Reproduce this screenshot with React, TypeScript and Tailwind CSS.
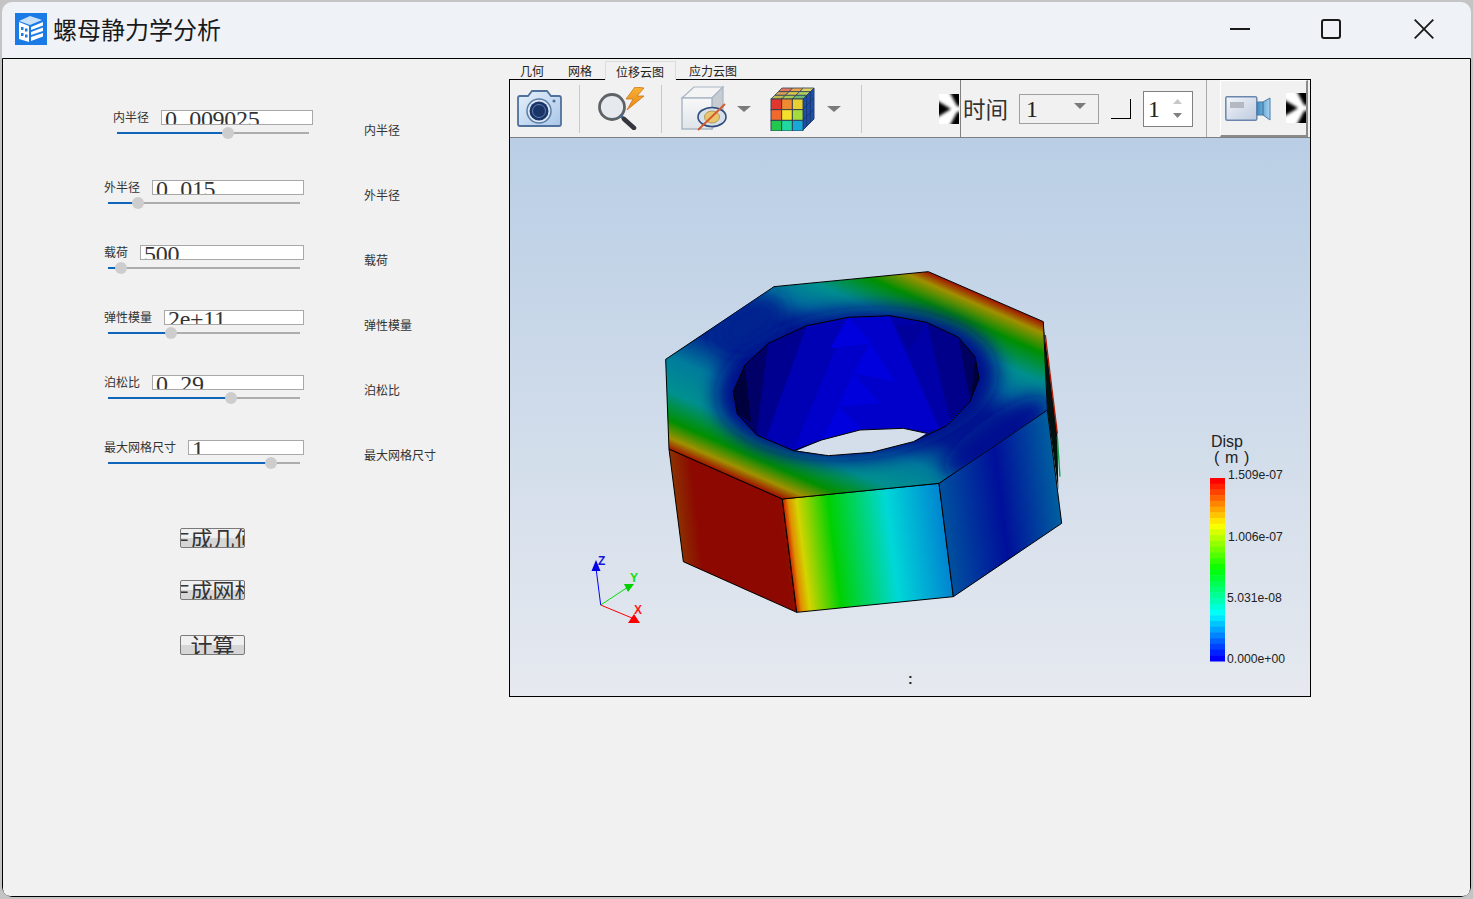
import React from "react";

const rows = [
  { label: "内半径", value: "0.009025", pct: 57.8, first: true },
  { label: "外半径", value: "0.015", pct: 15.6 },
  { label: "载荷", value: "500", pct: 6.8 },
  { label: "弹性模量", value: "2e+11", pct: 32.8 },
  { label: "泊松比", value: "0.29", pct: 64 },
  { label: "最大网格尺寸", value: "1", pct: 85 },
];

function Slider({ pct }: { pct: number }) {
  return (
    <div className="relative mx-1 mt-px flex h-[14px] items-center">
      <div className="h-[2px] bg-[#0f65b7]" style={{ width: `${pct}%` }} />
      <div className="h-[2px] flex-1 bg-[#adadad]" />
      <div
        className="absolute top-[1px] h-[12px] w-[12px] -translate-x-1/2 rounded-full bg-[#cdcdcd]"
        style={{ left: `${pct}%` }}
      />
    </div>
  );
}

function Row({ label, value, pct, first }: { label: string; value: string; pct: number; first?: boolean }) {
  const parts = value.split(".");
  return (
    <div className={first ? "ml-[9px] h-[70px] w-[200px]" : "h-[65px] w-[200px]"}>
      <div className="flex h-[15px] items-center">
        <span className="pb-[2px] text-xs leading-none text-[#333]">{label}</span>
        <div className="ml-3 h-[15px] flex-1 overflow-hidden border border-[#a8a8a8] bg-white pl-[3px] font-['Liberation_Serif',serif] text-[24px] leading-[24px] tracking-[-0.3px] text-[#333]">
          <div className="-mt-[4px] whitespace-nowrap">
            {parts[0]}
            {parts.length > 1 && <span className="tracking-[6.5px]">.</span>}
            {parts[1]}
          </div>
        </div>
      </div>
      <Slider pct={pct} />
    </div>
  );
}

function ClipButton({ text, className }: { text: string; className: string }) {
  return (
    <div
      className={`ml-[76px] flex h-[20px] w-[65px] justify-center overflow-hidden rounded-[2px] border border-[#7a7a7a] bg-linear-to-b from-[#f0f0f0] from-50% to-[#d6d6d6] to-50% text-[22px] leading-[16px] whitespace-nowrap text-[#333] ${className}`}
    >
      <span className="shrink-0">{text}</span>
    </div>
  );
}

function Chevron({ id }: { id: string }) {
  return (
    <svg width="20" height="30" viewBox="0 0 20 30" className="shrink-0">
      <defs>
        <filter id={`${id}b`} x="-30%" y="-30%" width="160%" height="160%">
          <feGaussianBlur stdDeviation="1.5" />
        </filter>
        <clipPath id={`${id}c`}>
          <rect width="20" height="30" />
        </clipPath>
      </defs>
      <rect width="20" height="30" fill="#fff" />
      <g clipPath={`url(#${id}c)`}>
        <g filter={`url(#${id}b)`}>
          <polygon points="-3,6 12,15 -3,24" fill="#000" />
          <polygon points="9,-5 25,-5 25,13 18,12" fill="#000" />
          <polygon points="9,35 25,35 25,17 18,18" fill="#000" />
        </g>
      </g>
    </svg>
  );
}

function Caret() {
  return (
    <svg width="14" height="6" viewBox="0 0 14 6" className="shrink-0">
      <polygon points="0,0 14,0 7,6" fill="#7a7a7a" />
    </svg>
  );
}

function Camera() {
  return (
    <svg width="45" height="37" viewBox="0 0 45 37" className="shrink-0 blur-[0.4px]">
      <defs>
        <linearGradient id="camb" x1="0" y1="0" x2="1" y2="1">
          <stop offset="0" stopColor="#e6f0fa" />
          <stop offset="1" stopColor="#a9c6e8" />
        </linearGradient>
      </defs>
      <path
        d="M3 6 H11 L15 1 H30 L34 6 H42 Q44 6 44 8 V34 Q44 36 42 36 H3 Q1 36 1 34 V8 Q1 6 3 6 Z"
        fill="url(#camb)"
        stroke="#50719c"
        strokeWidth="1.8"
      />
      <circle cx="22" cy="21" r="12" fill="#dbe7f5" stroke="#5b7ba6" strokeWidth="1.5" />
      <circle cx="22" cy="21" r="9.5" fill="#1b3468" />
      <circle cx="22" cy="21" r="6.5" fill="none" stroke="#5d7eb0" strokeWidth="1" />
      <circle cx="37" cy="11" r="1.6" fill="#50719c" />
    </svg>
  );
}

function Magnifier() {
  return (
    <svg width="47" height="43" viewBox="0 0 47 43" className="shrink-0 blur-[0.4px]">
      <defs>
        <linearGradient id="bolt" x1="0" y1="0" x2="0" y2="1">
          <stop offset="0" stopColor="#f9b233" />
          <stop offset="1" stopColor="#e98514" />
        </linearGradient>
      </defs>
      <polygon points="37,0 28,12 35,12 29,23 46,9 39,9 46,1" fill="url(#bolt)" stroke="#c9751a" strokeWidth="0.8" />
      <circle cx="14" cy="20" r="12.5" fill="#e6eaef" stroke="#5f6368" strokeWidth="2.8" />
      <line x1="23" y1="29" x2="26" y2="32" stroke="#3a6ea8" strokeWidth="3" />
      <line x1="26" y1="32" x2="36" y2="41" stroke="#33373c" strokeWidth="4.5" strokeLinecap="round" />
    </svg>
  );
}

function HideCube() {
  return (
    <svg width="47" height="45" viewBox="0 0 47 45" className="shrink-0 blur-[0.4px]">
      <defs>
        <linearGradient id="cf" x1="0" y1="0" x2="0" y2="1">
          <stop offset="0" stopColor="#f8f8f8" />
          <stop offset="1" stopColor="#dfe4ea" />
        </linearGradient>
      </defs>
      <polygon points="2,12 14,1 43,1 32,12" fill="#f4f4f4" stroke="#a9b5c4" strokeWidth="1.2" />
      <polygon points="32,12 43,1 43,31 32,43" fill="#c7ccd2" stroke="#a9b5c4" strokeWidth="1.2" />
      <rect x="2" y="12" width="30" height="31" fill="url(#cf)" stroke="#a9b5c4" strokeWidth="1.4" />
      <ellipse cx="32" cy="31" rx="14" ry="9.5" fill="#d7dfe9" stroke="#2f4d7c" strokeWidth="1.6" />
      <ellipse cx="32" cy="31" rx="7.5" ry="6" fill="#e8c66b" stroke="#b29a58" strokeWidth="1" />
      <line x1="18" y1="44" x2="45" y2="18" stroke="#d4572a" strokeWidth="1.8" />
    </svg>
  );
}

function ColorCube() {
  const cells = ["#e0382e", "#f08a2e", "#e8d030", "#ef6a2c", "#f4e02a", "#a4dc3c", "#22c84e", "#1ed8a0", "#18a8d8"];
  const tops = ["#e8785a", "#eca64c", "#e0d060", "#d8a050", "#dcc84c", "#b0d060", "#c0b850", "#a8c850", "#70b870"];
  return (
    <svg width="45" height="44" viewBox="0 0 45 44" className="shrink-0 blur-[0.4px]">
      {tops.map((c, i) => {
        const col = i % 3;
        const row = 2 - Math.floor(i / 3);
        const dx = (row * 11) / 3;
        const y0 = 12 - (row * 11) / 3;
        const w = 32 / 3;
        const x = 1 + dx + col * w;
        const d = 11 / 3;
        return (
          <polygon
            key={i}
            points={`${x},${y0} ${x + w},${y0} ${x + w + d},${y0 - d} ${x + d},${y0 - d}`}
            fill={c}
            stroke="#2f3f5e"
            strokeWidth="0.8"
          />
        );
      })}
      <polygon points="33,12 44,1 44,32 33,43" fill="#1f4ea6" stroke="#27406e" strokeWidth="1" />
      <line x1="36.6" y1="8.4" x2="36.6" y2="39.4" stroke="#15356e" strokeWidth="0.8" />
      <line x1="40.3" y1="4.7" x2="40.3" y2="35.7" stroke="#15356e" strokeWidth="0.8" />
      <line x1="33" y1="22" x2="44" y2="11" stroke="#15356e" strokeWidth="0.8" />
      <line x1="33" y1="33" x2="44" y2="22" stroke="#15356e" strokeWidth="0.8" />
      {cells.map((c, i) => (
        <rect
          key={i}
          x={1 + (i % 3) * 10.67}
          y={12 + Math.floor(i / 3) * 10.67}
          width="10.67"
          height="10.67"
          fill={c}
          stroke="#2f3a52"
          strokeWidth="0.9"
        />
      ))}
    </svg>
  );
}

function VideoCam() {
  return (
    <svg width="46" height="25" viewBox="0 0 46 25" className="shrink-0 blur-[0.4px]">
      <defs>
        <linearGradient id="vb" x1="0" y1="0" x2="1" y2="1">
          <stop offset="0" stopColor="#f4f6fa" />
          <stop offset="1" stopColor="#bcc9de" />
        </linearGradient>
        <linearGradient id="vl" x1="0" y1="0" x2="1" y2="0">
          <stop offset="0" stopColor="#3d88bf" />
          <stop offset="1" stopColor="#a8d6f0" />
        </linearGradient>
      </defs>
      <rect x="0.8" y="0.8" width="31" height="23.4" rx="1.5" fill="url(#vb)" stroke="#6a86ad" strokeWidth="1.5" />
      <rect x="5" y="6" width="14" height="6" fill="#b4b8c0" />
      <polygon points="32,6 38,6 45,2 45,24 38,19 32,19" fill="url(#vl)" stroke="#4a7aa8" strokeWidth="1" />
      <line x1="38" y1="6" x2="38" y2="19" stroke="#3a6a98" strokeWidth="1" />
    </svg>
  );
}

function Logo() {
  return (
    <svg width="32" height="32" viewBox="0 0 32 32" className="shrink-0">
      <rect width="32" height="32" fill="#1a7ae6" />
      <polygon points="4,8 15,3 27,7 15,12" fill="#c9e0fb" />
      <polygon points="4,9 14,13 14,29 4,26" fill="#fff" />
      <rect x="6" y="14" width="2.5" height="3" fill="#1a7ae6" />
      <rect x="10" y="15.5" width="2.5" height="3" fill="#1a7ae6" />
      <rect x="6" y="20" width="2.5" height="3" fill="#1a7ae6" />
      <rect x="10" y="21.5" width="2.5" height="3" fill="#1a7ae6" />
      <polygon points="16,14 28,9 28,12.5 16,17" fill="#fff" />
      <polygon points="16,19 28,14.5 28,18 16,22" fill="#fff" />
      <polygon points="16,24 28,20 28,23.5 16,28" fill="#fff" />
    </svg>
  );
}

const facets: [string, string][] = [
  ["250,395 285,315 355,250 470,197 595,172 720,167 830,187 925,232 975,290 987,355 960,425 890,497 830,520 760,505 630,510 515,540 430,572 320,525 262,462", "#0000b4"],
  ["250,395 285,315 305,490 262,462", "#00003c"],
  ["285,315 355,250 320,525 262,462 305,490", "#000068"],
  ["355,250 470,197 350,530 320,525", "#000090"],
  ["470,197 595,172 420,570 350,530", "#0000b4"],
  ["595,172 720,167 870,510 760,505 630,510 515,540 430,572", "#0000ca"],
  ["595,172 665,250 540,265", "#0000de"],
  ["660,250 735,365 610,340", "#0000de"],
  ["610,340 690,430 565,440", "#0000dc"],
  ["565,440 640,510 515,540", "#0000de"],
  ["720,167 830,187 900,480 870,510", "#0000a8"],
  ["735,200 830,187 780,270", "#00009a"],
  ["830,187 925,232 960,425 900,480", "#00008a"],
  ["925,232 975,290 960,425", "#000060"],
  ["975,290 987,355 960,425", "#00003c"],
];

function Scene() {
  const bands = Array.from({ length: 32 }, (_, i) => i);
  return (
    <svg width="800" height="558" viewBox="510 138 800 558" className="block">
      <defs>
        <linearGradient id="topf" gradientUnits="userSpaceOnUse" x1="227" y1="642" x2="546" y2="-91">
          <stop offset="0" stopColor="#a01000" />
          <stop offset="0.04" stopColor="#a09000" />
          <stop offset="0.1" stopColor="#008f00" />
          <stop offset="0.2" stopColor="#009090" />
          <stop offset="0.32" stopColor="#007c9c" />
          <stop offset="0.44" stopColor="#002890" />
          <stop offset="0.6" stopColor="#002890" />
          <stop offset="0.7" stopColor="#00709c" />
          <stop offset="0.79" stopColor="#009090" />
          <stop offset="0.89" stopColor="#008f00" />
          <stop offset="0.96" stopColor="#a09000" />
          <stop offset="1" stopColor="#a01000" />
        </linearGradient>
        <linearGradient id="midf" gradientUnits="userSpaceOnUse" x1="400" y1="720" x2="890" y2="660">
          <stop offset="0" stopColor="#d03000" />
          <stop offset="0.03" stopColor="#e09000" />
          <stop offset="0.08" stopColor="#d4d400" />
          <stop offset="0.27" stopColor="#00d000" />
          <stop offset="0.62" stopColor="#00d8d8" />
          <stop offset="1" stopColor="#0078d0" />
        </linearGradient>
        <linearGradient id="rightf" gradientUnits="userSpaceOnUse" x1="870" y1="670" x2="1215" y2="626">
          <stop offset="0" stopColor="#00509f" />
          <stop offset="0.5" stopColor="#000f9a" />
          <stop offset="1" stopColor="#00609f" />
        </linearGradient>
        <linearGradient id="leftf" gradientUnits="userSpaceOnUse" x1="60" y1="700" x2="430" y2="660">
          <stop offset="0" stopColor="#8c3a00" />
          <stop offset="0.2" stopColor="#8c0800" />
          <stop offset="0.85" stopColor="#8c0800" />
          <stop offset="1" stopColor="#8c1800" />
        </linearGradient>
        <filter id="soft" x="-40%" y="-40%" width="180%" height="180%">
          <feGaussianBlur stdDeviation="30" />
        </filter>
        <clipPath id="topclip">
          <polygon points="47,298 372,80 835,35 1180,185 1192,450 867,670 397,717 57,567" />
        </clipPath>
      </defs>
      <g transform="translate(650 260) scale(0.33333)">
        <polygon points="57,567 397,717 440,1057 100,905" fill="url(#leftf)" stroke="#000" strokeWidth="3" strokeLinejoin="round" />
        <polygon points="397,717 867,670 910,1010 440,1057" fill="url(#midf)" stroke="#000" strokeWidth="3" strokeLinejoin="round" />
        <polygon points="867,670 1192,450 1235,790 910,1010" fill="url(#rightf)" stroke="#000" strokeWidth="3" strokeLinejoin="round" />
        <polygon points="1182,205 1192,450 1225,690 1222,520" fill="#03120f" />
        <line x1="1186" y1="225" x2="1222" y2="520" stroke="#b01a00" strokeWidth="4" />
        <line x1="1222" y1="530" x2="1230" y2="650" stroke="#1aa050" strokeWidth="4" />
        <polygon points="47,298 372,80 835,35 1180,185 1192,450 867,670 397,717 57,567" fill="url(#topf)" stroke="#000" strokeWidth="3" strokeLinejoin="round" />
        <g clipPath="url(#topclip)">
          <ellipse cx="620" cy="372" rx="425" ry="225" transform="rotate(-6 620 372)" fill="#000a8c" filter="url(#soft)" />
          <ellipse cx="1040" cy="530" rx="190" ry="60" transform="rotate(-35 1040 530)" fill="#000f90" filter="url(#soft)" />
          <ellipse cx="300" cy="190" rx="110" ry="60" transform="rotate(-30 300 190)" fill="#00208f" filter="url(#soft)" />
        </g>
        {facets.map(([p, c], i) => (
          <polygon key={i} points={p} fill={c} />
        ))}
        <polygon points="440,572 515,540 630,510 760,505 830,520 790,545 665,577 535,587" fill="#d3deea" />
        <polyline
          points="430,572 535,587 665,577 790,545 890,497 960,425 987,355 975,290 925,232 830,187 720,167 595,172 470,197 355,250 285,315 250,395 262,462 320,525 430,572 515,540 630,510 760,505 830,520"
          fill="none"
          stroke="#000"
          strokeWidth="3"
          strokeLinejoin="round"
        />
      </g>

      <g>
        <line x1="600.7" y1="605" x2="596" y2="568" stroke="#0000ff" strokeWidth="1" />
        <polygon points="596,560 591.5,571 600.5,571" fill="#0000e6" />
        <line x1="600.7" y1="605" x2="628" y2="587" stroke="#00e000" strokeWidth="1" />
        <polygon points="624,584 634,584 628,592" fill="#00d000" />
        <line x1="600.7" y1="605" x2="632" y2="618" stroke="#ff0000" strokeWidth="1" />
        <polygon points="634,614 640,623 628,623" fill="#ff0000" />
        <text x="598" y="565" fontFamily="'Liberation Sans',sans-serif" fontSize="12" fontWeight="700" fill="#1414e0">Z</text>
        <text x="630" y="582" fontFamily="'Liberation Sans',sans-serif" fontSize="12" fontWeight="700" fill="#10e010">Y</text>
        <text x="634" y="614" fontFamily="'Liberation Sans',sans-serif" fontSize="12" fontWeight="700" fill="#ff1a1a">X</text>
      </g>

      {bands.map((i) => (
        <rect key={i} x="1210" y={478 + (i * 183) / 32} width="15" height={183 / 32 + 0.5} fill={`hsl(${(i * 240) / 31} 100% 50%)`} />
      ))}
      <g fontFamily="'Liberation Sans',sans-serif" fill="#222">
        <text x="1211" y="447" fontSize="16">Disp</text>
        <text x="1214" y="463" fontSize="16" letterSpacing="0.6">( m )</text>
        <text x="1228" y="479" fontSize="12.2">1.509e-07</text>
        <text x="1228" y="541" fontSize="12.2">1.006e-07</text>
        <text x="1227" y="602" fontSize="12.2">5.031e-08</text>
        <text x="1227" y="663" fontSize="12.2">0.000e+00</text>
        <text x="908" y="684" fontSize="14" fontWeight="700">:</text>
      </g>
    </svg>
  );
}

export default function App() {
  return (
    <div className="h-[899px] w-[1473px] overflow-hidden bg-[#c4c4c4] p-[2px] font-['Noto_Sans_CJK_SC','Noto_Sans',sans-serif]">
      <div className="flex h-full flex-col overflow-hidden rounded-[10px] bg-[#eff3f8]">
        {/* title bar */}
        <div className="flex h-[56px] shrink-0 items-center pb-[2px]">
          <div className="ml-[13px] flex">
            <Logo />
          </div>
          <span className="ml-[6px] text-2xl leading-none text-[#1a1a1a]">螺母静力学分析</span>
          <div className="ml-auto flex items-center">
            <svg width="20" height="20" viewBox="0 0 20 20" className="mr-[71px]">
              <line x1="0" y1="10" x2="20" y2="10" stroke="#1a1a1a" strokeWidth="2" />
            </svg>
            <svg width="20" height="20" viewBox="0 0 20 20" className="mr-[73px]">
              <rect x="1" y="1" width="18" height="18" rx="2" fill="none" stroke="#1a1a1a" strokeWidth="2" />
            </svg>
            <svg width="20" height="20" viewBox="0 0 20 20" className="mr-[37px]">
              <path d="M0.7 0.7 L19.3 19.3 M19.3 0.7 L0.7 19.3" fill="none" stroke="#1a1a1a" strokeWidth="1.8" />
            </svg>
          </div>
        </div>

        {/* body */}
        <div className="flex flex-1 overflow-hidden rounded-b-[8px] border border-black bg-[#f1f1f1]">
          {/* form */}
          <div className="ml-[101px] w-[209px] shrink-0 pt-[51px]">
            {rows.map((r) => (
              <Row key={r.label} {...r} />
            ))}
            <ClipButton text="生成几何" className="mt-[23px]" />
            <ClipButton text="生成网格" className="mt-[32px]" />
            <ClipButton text="计算" className="mt-[35px]" />
          </div>

          {/* labels */}
          <div className="ml-[51px] w-[145px] shrink-0 pt-[38px]">
            {rows.map((r) => (
              <div key={r.label} className="flex h-[65px] items-center text-xs text-[#333]">
                {r.label}
              </div>
            ))}
          </div>

          {/* viewer */}
          <div className="w-[802px] shrink-0 pt-[2px]">
            <div className="relative z-10 flex h-[19px] text-xs leading-[19px] text-[#222]">
              <div className="w-[46px] pl-[11px]">几何</div>
              <div className="w-[50px] pl-[13px]">网格</div>
              <div className="w-[71px] border border-b-0 border-[#dcdcdc] bg-[#f1f1f1] pl-[10px]">位移云图</div>
              <div className="w-[72px] pl-[13px]">应力云图</div>
            </div>
            <div className="-mt-px h-[618px] border border-black">
              <div className="flex h-[58px] items-center border-b border-[#808080] bg-[#f1f1f1]">
                <div className="ml-[7px] flex">
                  <Camera />
                </div>
                <div className="ml-[17px] h-[48px] w-px bg-[#c8c8c8]" />
                <div className="ml-[18px] flex">
                  <Magnifier />
                </div>
                <div className="ml-[16px] h-[48px] w-px bg-[#c8c8c8]" />
                <div className="ml-[18px] flex">
                  <HideCube />
                </div>
                <div className="ml-[10px] flex">
                  <Caret />
                </div>
                <div className="ml-[19px] flex">
                  <ColorCube />
                </div>
                <div className="ml-[12px] flex">
                  <Caret />
                </div>
                <div className="ml-[20px] h-[48px] w-px bg-[#c8c8c8]" />
                <div className="ml-[77px] flex">
                  <Chevron id="chva" />
                </div>
                <div className="ml-px h-full w-px bg-[#808080]" />
                <span className="ml-[2px] w-[45px] shrink-0 text-[22.5px] leading-none text-[#333]">时间</span>
                <div className="ml-[11px] flex h-[30px] w-[80px] items-center border border-[#a0a0a0] pl-[6px] font-['Liberation_Serif',serif] text-[24px] leading-none text-[#222]">
                  <span>1</span>
                  <svg width="12" height="6" viewBox="0 0 12 6" className="mb-[6px] ml-auto mr-[12px]">
                    <polygon points="0,0 12,0 6,6" fill="#7a7a7a" />
                  </svg>
                </div>
                <div className="ml-[12px] h-[20px] w-[20px] border-r border-b border-black" />
                <div className="ml-[12px] flex h-[36px] w-[50px] items-center border border-[#808080] bg-white pl-[4px] font-['Liberation_Serif',serif] text-[24px] leading-none text-[#222]">
                  <span>1</span>
                  <div className="ml-auto mr-[10px] flex flex-col gap-[9px]">
                    <svg width="9" height="5" viewBox="0 0 9 5" className="block">
                      <polygon points="4.5,0 9,5 0,5" fill="#c8c8c8" />
                    </svg>
                    <svg width="9" height="5" viewBox="0 0 9 5" className="block">
                      <polygon points="0,0 9,0 4.5,5" fill="#808080" />
                    </svg>
                  </div>
                </div>
                <div className="ml-[13px] h-full w-px bg-[#a8a8a8]" />
                <div className="ml-[13px] flex h-full w-[88px] items-center border-t border-l border-b-2 border-r-2 border-t-white border-l-white border-b-[#8a8a8a] border-r-[#8a8a8a] pl-[4px]">
                  <VideoCam />
                  <div className="ml-[15px] flex">
                    <Chevron id="chvb" />
                  </div>
                </div>
              </div>
              <div className="h-[558px] bg-linear-to-b from-[#b9cee5] to-[#e6e9ef]">
                <Scene />
              </div>
            </div>
          </div>
        </div>
      </div>
    </div>
  );
}
